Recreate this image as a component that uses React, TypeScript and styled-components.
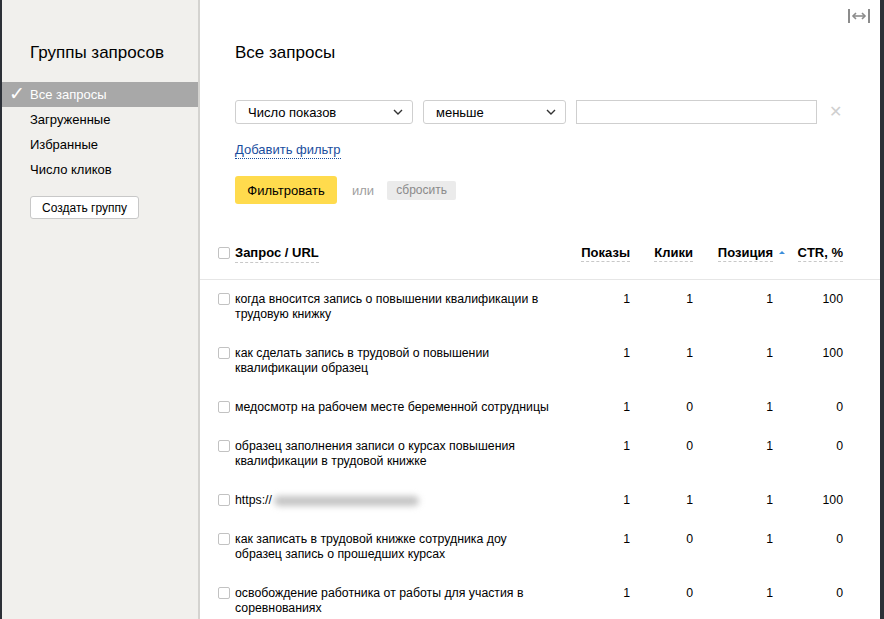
import React from 'react';
import styled, { createGlobalStyle } from 'styled-components';

const GlobalStyle = createGlobalStyle`
  html, body {
    margin: 0;
    padding: 0;
    background: #fff;
  }
  body {
    font-family: "Liberation Sans", Arial, sans-serif;
    color: #000;
  }
`;

const Page = styled.div`
  display: flex;
  height: 619px;
  overflow: hidden;
  border-left: 2px solid #2c3037;
  border-right: 4px solid #2c3037;
`;

const Sidebar = styled.aside`
  width: 198px;
  flex: 0 0 198px;
  background: #f1f0ed;
  border-right: 2px solid #d4d3d0;
  padding-top: 43px;
  box-sizing: border-box;
`;

const SideTitle = styled.h2`
  margin: 0 0 19px 28px;
  font-size: 17px;
  font-weight: normal;
  line-height: 20px;
`;

const SideItem = styled.div<{ $active?: boolean }>`
  position: relative;
  height: 25px;
  line-height: 25px;
  padding-left: 28px;
  font-size: 13px;
  background: ${(p) => (p.$active ? '#a8a8a8' : 'transparent')};
  color: ${(p) => (p.$active ? '#fff' : '#000')};
`;

const Check = styled.span`
  position: absolute;
  left: 7px;
  top: -1px;
  font-size: 19px;
  font-family: "DejaVu Sans", sans-serif;
  font-weight: 300;
  color: #fff;
`;

const CreateButton = styled.button`
  margin: 14px 0 0 28px;
  height: 23px;
  width: 109px;
  background: #fff;
  border: 1px solid #c8c8c8;
  border-radius: 3px;
  font-family: inherit;
  font-size: 12px;
  color: #000;
  padding: 0;
`;

const Main = styled.main`
  flex: 1;
  min-width: 0;
`;

const TopBar = styled.div`
  height: 32px;
  display: flex;
  justify-content: flex-end;
  align-items: center;
  padding-right: 10px;
`;

const Content = styled.div`
  padding-left: 35px;
`;

const Title = styled.h1`
  margin: 11px 0 0;
  font-size: 17px;
  font-weight: normal;
  line-height: 20px;
`;

const FilterRow = styled.div`
  display: flex;
  align-items: center;
  gap: 10px;
  margin-top: 37px;
  height: 24px;
`;

const Select = styled.div<{ $width: number }>`
  width: ${(p) => p.$width}px;
  height: 24px;
  box-sizing: border-box;
  border: 1px solid #cfcfcf;
  border-radius: 3px;
  display: flex;
  align-items: center;
  justify-content: space-between;
  padding: 0 9px 0 12px;
  font-size: 13px;
`;

const TextInput = styled.div`
  width: 241px;
  height: 24px;
  box-sizing: border-box;
  border: 1px solid #cfcfcf;
`;

const Clear = styled.span`
  margin-left: 2px;
  font-size: 16px;
  color: #cfcfcf;
  line-height: 24px;
`;

const AddLink = styled.a`
  display: inline-block;
  margin-top: 18px;
  font-size: 13px;
  line-height: 16px;
  color: #1a4e9e;
  text-decoration: none;
  border-bottom: 1px dotted #1a4e9e;
`;

const Actions = styled.div`
  display: flex;
  align-items: center;
  margin-top: 17px;
`;

const FilterButton = styled.button`
  height: 28px;
  width: 102px;
  background: #ffdb4d;
  border: none;
  border-radius: 3px;
  font-family: inherit;
  font-size: 13px;
  color: #000;
  padding: 0;
`;

const Or = styled.span`
  margin: 0 13px 0 15px;
  font-size: 13px;
  color: #a0a0a0;
`;

const ResetButton = styled.button`
  height: 19px;
  width: 69px;
  background: #ebebeb;
  border: none;
  border-radius: 2px;
  font-family: inherit;
  font-size: 12px;
  color: #8a8a8a;
  padding: 0;
`;

const GRID = '337px 75px 63px 80px 70px';

const HeadRow = styled.div`
  display: grid;
  grid-template-columns: ${GRID};
  margin-top: 41px;
  padding: 0 0 16px 18px;
  border-bottom: 1px solid #e6e6e6;
  font-size: 13px;
  font-weight: bold;
  line-height: 16px;
`;

const Row = styled.div`
  display: grid;
  grid-template-columns: ${GRID};
  padding: 12px 0 12px 18px;
  font-size: 12.3px;
  line-height: 15px;
`;

const QueryCell = styled.div`
  display: flex;
  align-items: flex-start;
  gap: 5px;
`;

const Box = styled.span<{ $top: number }>`
  flex: 0 0 12px;
  width: 12px;
  height: 12px;
  box-sizing: border-box;
  margin-top: ${(p) => p.$top}px;
  border: 1px solid #c2c2c2;
  border-radius: 2px;
  background: #fff;
`;

const Dashed = styled.span`
  padding-bottom: 1px;
  border-bottom: 1px dashed #c8c8c8;
`;

const NumHead = styled.div`
  text-align: right;
`;

const Sorted = styled.span`
  position: relative;
  &::after {
    content: '';
    position: absolute;
    right: -12px;
    top: 6px;
    border-left: 3px solid transparent;
    border-right: 3px solid transparent;
    border-bottom: 3px solid #3c8fdc;
  }
`;

const Num = styled.div`
  text-align: right;
`;

const Blur = styled.span`
  display: inline-block;
  width: 145px;
  height: 10px;
  margin-left: 2px;
  vertical-align: middle;
  background: #c4c4c4;
  border-radius: 5px;
  filter: blur(3px);
`;

type Item = { q: React.ReactNode; v: [string, string, string, string] };

const rows: Item[] = [
  { q: 'когда вносится запись о повышении квалификации в трудовую книжку', v: ['1', '1', '1', '100'] },
  { q: 'как сделать запись в трудовой о повышении квалификации образец', v: ['1', '1', '1', '100'] },
  { q: 'медосмотр на рабочем месте беременной сотрудницы', v: ['1', '0', '1', '0'] },
  { q: 'образец заполнения записи о курсах повышения квалификации в трудовой книжке', v: ['1', '0', '1', '0'] },
  { q: <>https://<Blur /></>, v: ['1', '1', '1', '100'] },
  { q: 'как записать в трудовой книжке сотрудника доу образец запись о прошедших курсах', v: ['1', '0', '1', '0'] },
  { q: 'освобождение работника от работы для участия в соревнованиях', v: ['1', '0', '1', '0'] },
];

function ExpandIcon() {
  return (
    <svg width="22" height="14" viewBox="0 0 22 14" fill="none" stroke="#8c8c8c" strokeWidth="2">
      <path d="M1 0v14M21 0v14" />
      <path d="M5 7h12" strokeWidth="1.6" />
      <path d="M8 4L5 7l3 3M14 4l3 3-3 3" strokeWidth="1.6" />
    </svg>
  );
}

function Chevron() {
  return (
    <svg width="10" height="6" viewBox="0 0 10 6" fill="none" stroke="#333" strokeWidth="1.4">
      <path d="M1 1l4 4 4-4" />
    </svg>
  );
}

export default function App() {
  return (
    <>
      <GlobalStyle />
      <Page>
        <Sidebar>
          <SideTitle>Группы запросов</SideTitle>
          <SideItem $active>
            <Check>✓</Check>
            Все запросы
          </SideItem>
          <SideItem>Загруженные</SideItem>
          <SideItem>Избранные</SideItem>
          <SideItem>Число кликов</SideItem>
          <CreateButton>Создать группу</CreateButton>
        </Sidebar>
        <Main>
          <TopBar>
            <ExpandIcon />
          </TopBar>
          <Content>
            <Title>Все запросы</Title>
            <FilterRow>
              <Select $width={178}>
                Число показов
                <Chevron />
              </Select>
              <Select $width={143}>
                меньше
                <Chevron />
              </Select>
              <TextInput />
              <Clear>✕</Clear>
            </FilterRow>
            <AddLink href="#">Добавить фильтр</AddLink>
            <Actions>
              <FilterButton>Фильтровать</FilterButton>
              <Or>или</Or>
              <ResetButton>сбросить</ResetButton>
            </Actions>
          </Content>
          <HeadRow>
            <QueryCell>
              <Box $top={2} />
              <Dashed>Запрос / URL</Dashed>
            </QueryCell>
            <NumHead>
              <Dashed>Показы</Dashed>
            </NumHead>
            <NumHead>
              <Dashed>Клики</Dashed>
            </NumHead>
            <NumHead>
              <Sorted>
                <Dashed>Позиция</Dashed>
              </Sorted>
            </NumHead>
            <NumHead>
              <Dashed>CTR, %</Dashed>
            </NumHead>
          </HeadRow>
          {rows.map((r, i) => (
            <Row key={i}>
              <QueryCell>
                <Box $top={1} />
                <span>{r.q}</span>
              </QueryCell>
              {r.v.map((n, j) => (
                <Num key={j}>{n}</Num>
              ))}
            </Row>
          ))}
        </Main>
      </Page>
    </>
  );
}
